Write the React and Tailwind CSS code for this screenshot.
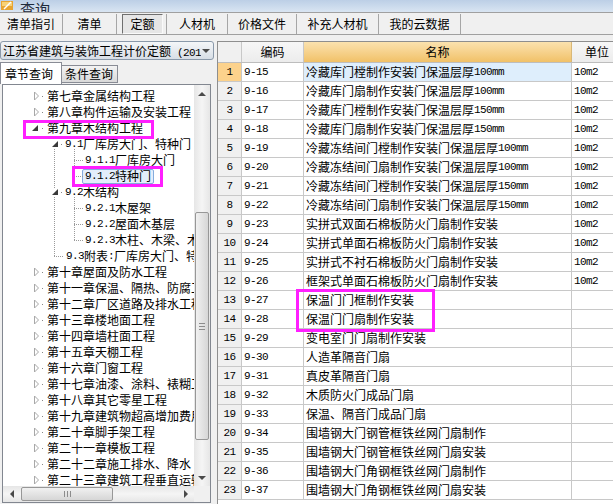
import React from "react";

const tabs = [
  ["清单指引", "w-[63px]"],
  ["清单", "w-[54px]"],
  ["定额", "w-[50px]", true],
  ["人材机", "w-[61px]"],
  ["价格文件", "w-[69px]"],
  ["补充人材机", "w-[82px]"],
  ["我的云数据", "w-[82px]"],
];

const tree = [
  { t: "第七章金属结构工程", pl: "pl-[44px]" },
  { t: "第八章构件运输及安装工程", pl: "pl-[44px]" },
  { t: "第九章木结构工程", pl: "pl-[44px]" },
  { t: "9.1厂库房大门、特种门", pl: "pl-[62px]" },
  { t: "9.1.1厂库房大门", pl: "pl-[82px]" },
  { t: "9.1.2特种门", pl: "pl-[79px]", sel: true },
  { t: "9.2木结构", pl: "pl-[62px]" },
  { t: "9.2.1木屋架", pl: "pl-[82px]" },
  { t: "9.2.2屋面木基层", pl: "pl-[82px]" },
  { t: "9.2.3木柱、木梁、木楼梯", pl: "pl-[82px]" },
  { t: "9.3附表:厂库房大门、特种门五金铁件表", pl: "pl-[63px]" },
  { t: "第十章屋面及防水工程", pl: "pl-[44px]" },
  { t: "第十一章保温、隔热、防腐工程", pl: "pl-[44px]" },
  { t: "第十二章厂区道路及排水工程", pl: "pl-[44px]" },
  { t: "第十三章楼地面工程", pl: "pl-[44px]" },
  { t: "第十四章墙柱面工程", pl: "pl-[44px]" },
  { t: "第十五章天棚工程", pl: "pl-[44px]" },
  { t: "第十六章门窗工程", pl: "pl-[44px]" },
  { t: "第十七章油漆、涂料、裱糊工程", pl: "pl-[44px]" },
  { t: "第十八章其它零星工程", pl: "pl-[44px]" },
  { t: "第十九章建筑物超高增加费用", pl: "pl-[44px]" },
  { t: "第二十章脚手架工程", pl: "pl-[44px]" },
  { t: "第二十一章模板工程", pl: "pl-[44px]" },
  { t: "第二十二章施工排水、降水", pl: "pl-[44px]" },
  { t: "第二十三章建筑工程垂直运输", pl: "pl-[44px]" },
];

const rows = [
  ["9-15", "冷藏库门樘制作安装门保温层厚100mm", "10m2"],
  ["9-16", "冷藏库门扇制作安装门保温层厚100mm", "10m2"],
  ["9-17", "冷藏库门樘制作安装门保温层厚150mm", "10m2"],
  ["9-18", "冷藏库门扇制作安装门保温层厚150mm", "10m2"],
  ["9-19", "冷藏冻结间门樘制作安装门保温层厚100mm", "10m2"],
  ["9-20", "冷藏冻结间门扇制作安装门保温层厚100mm", "10m2"],
  ["9-21", "冷藏冻结间门樘制作安装门保温层厚150mm", "10m2"],
  ["9-22", "冷藏冻结间门扇制作安装门保温层厚150mm", "10m2"],
  ["9-23", "实拼式双面石棉板防火门扇制作安装", "10m2"],
  ["9-24", "实拼式单面石棉板防火门扇制作安装", "10m2"],
  ["9-25", "实拼式不衬石棉板防火门扇制作安装", "10m2"],
  ["9-26", "框架式单面石棉板防火门扇制作安装", "10m2"],
  ["9-27", "保温门门框制作安装", ""],
  ["9-28", "保温门门扇制作安装", ""],
  ["9-29", "变电室门门扇制作安装", ""],
  ["9-30", "人造革隔音门扇", ""],
  ["9-31", "真皮革隔音门扇", ""],
  ["9-32", "木质防火门成品门扇", ""],
  ["9-33", "保温、隔音门成品门扇", ""],
  ["9-34", "围墙钢大门钢管框铁丝网门扇制作", ""],
  ["9-35", "围墙钢大门钢管框铁丝网门扇安装", ""],
  ["9-36", "围墙钢大门角钢框铁丝网门扇制作", ""],
  ["9-37", "围墙钢大门角钢框铁丝网门扇安装", ""],
];

const ascii = /^[\x20-\x7e]+$/;

// half-width runs in a mono face so digits sit at 6px like the original
function Mix({ t }) {
  return t
    .split(/([\x20-\x7e]+)/)
    .filter(Boolean)
    .map((s, i) =>
      ascii.test(s) ? (
        <span key={i} className="[font-family:'Liberation_Mono',monospace] text-[11px] leading-[12px] tracking-[-0.6px]">
          {s}
        </span>
      ) : (
        <span key={i} className="leading-[14px]">{s}</span>
      )
    );
}

function TreeLines() {
  const c = (i) => 11 + 16 * i;
  const collapsed = [0, 1, 11, 12, 13, 14, 15, 16, 17, 18, 19, 20, 21, 22, 23, 24];
  return (
    <svg className="absolute left-0 top-0 pointer-events-none" width="191" height="401">
      {collapsed.map((i) => (
        <g key={i}>
          <polygon points={`31.5,${c(i) - 4} 35.5,${c(i)} 31.5,${c(i) + 4}`} fill="#fff" stroke="#a8a8a8" />
          <rect x="39" y={c(i)} width="1" height="1" fill="#888" />
        </g>
      ))}
      <polygon points={`35,${c(2) - 3} 35,${c(2) + 3} 29,${c(2) + 3}`} fill="#3a3a3a" />
      <rect x="39" y={c(2)} width="1" height="1" fill="#888" />
      {[3, 6].map((i) => (
        <g key={i}>
          <polygon points={`55,${c(i) - 3} 55,${c(i) + 3} 49,${c(i) + 3}`} fill="#3a3a3a" />
          <rect x="58" y={c(i)} width="1" height="1" fill="#888" />
        </g>
      ))}
      <g stroke="#9a9a9a" strokeDasharray="1 1" shapeRendering="crispEdges">
        <line x1="51.5" y1={c(3) + 5} x2="51.5" y2={c(6) - 4} />
        <line x1="51.5" y1={c(6) + 5} x2="51.5" y2={c(10)} />
        <line x1="51" y1={c(10) + 0.5} x2="61" y2={c(10) + 0.5} />
        <line x1="71.5" y1={c(3) + 5} x2="71.5" y2={c(5)} />
        <line x1="71.5" y1={c(6) + 5} x2="71.5" y2={c(9)} />
        {[4, 5, 7, 8, 9].map((i) => (
          <line key={i} x1="71" y1={c(i) + 0.5} x2="81" y2={c(i) + 0.5} />
        ))}
      </g>
    </svg>
  );
}

function Tri({ d }) {
  const p = {
    up: "0,4 4,0 8,4",
    down: "0,0 8,0 4,4",
    left: "4,0 0,4 4,8",
    right: "0,0 4,4 0,8",
  }[d];
  const w = d === "up" || d === "down" ? 8 : 4;
  const h = d === "up" || d === "down" ? 4 : 8;
  return (
    <svg width={w} height={h}>
      <polygon points={p} fill="#4a4a4a" />
    </svg>
  );
}

function Box({ className }) {
  return <div className={`absolute border-[3px] border-[#ff1fff] pointer-events-none ${className}`} />;
}

export default function App() {
  return (
    <div className="relative w-[613px] h-[504px] overflow-hidden bg-[#f0f0f0] text-[12px] text-black [font-family:'Noto_Sans_CJK_SC',sans-serif]">
      {/* title bar, mostly cropped */}
      <div className="h-[12px] overflow-hidden bg-gradient-to-b from-[#bccfe6] to-[#d9e5f2] flex items-end gap-[6px] pl-[1px]">
        <svg width="13" height="10" className="mb-[1px]">
          <rect x="0" y="0" width="12" height="9" fill="#e8a532" />
          <rect x="1" y="1" width="10" height="4" fill="#f7d277" />
          <line x1="3" y1="8" x2="10" y2="1" stroke="#fff" strokeWidth="1.5" />
        </svg>
        <span className="text-[15px] leading-[12px] -mb-[3px] text-[#1e2a3a]">查询</span>
      </div>

      {/* main tab bar */}
      <div className="h-[23px] border-t border-b border-[#a0a0a0] flex items-center">
        {tabs.map(([t, w, sel]) => (
          <div key={t} className={`${w} h-[20px] border-r border-[#a6a6a6] flex items-center ${sel ? "pl-[5px]" : "justify-center"}`}>
            {sel ? (
              <div className="w-[41px] h-[20px] border border-t-[#6f6f6f] border-l-[#6f6f6f] border-r-[#fafafa] border-b-[#fafafa] bg-[#e6e6e6] flex items-center justify-center">
                {t}
              </div>
            ) : (
              t
            )}
          </div>
        ))}
      </div>

      <div className="flex pt-[6px] h-[469px]">
        {/* left column */}
        <div className="w-[214px] flex flex-col">
          <div className="h-[19px] rounded-[3px] border border-[#8a99aa] bg-gradient-to-b from-[#f4f6f8] to-[#d7dee6] flex items-center pl-[2px] pr-[3px]">
            <div className="w-[198px] overflow-hidden whitespace-nowrap">
              <Mix t="江苏省建筑与装饰工程计价定额 (2014)" />
            </div>
            <div className="ml-auto flex items-center">
              <Tri d="down" />
            </div>
          </div>

          <div className="mt-[2px] h-[22px] flex items-end">
            <div className="w-[62px] h-[22px] bg-white border border-b-0 border-[#898c95] flex items-center pl-[4px]">章节查询</div>
            <div className="w-[56px] h-[18px] mb-[1px] bg-gradient-to-b from-[#f3f3f3] to-[#d9d9d9] border border-l-0 border-[#898c95] flex items-center pl-[3px]">
              条件查询
            </div>
          </div>

          <div className="flex-1 pl-[2px]">
            <div className="w-[209px] h-[419px] border border-[#828790] bg-white flex flex-col">
              <div className="flex h-[401px]">
                <div className="relative w-[191px] overflow-hidden pt-[3px]">
                  <TreeLines />
                  {tree.map((n) => (
                    <div key={n.t} className={`h-[16px] flex items-center whitespace-nowrap ${n.pl}`}>
                      {n.sel ? (
                        <span className="border border-[#84acdd] bg-[#e3eefb] rounded-[2px] px-[2px] flex items-center h-[15px]">
                          <Mix t={n.t} />
                        </span>
                      ) : (
                        <Mix t={n.t} />
                      )}
                    </div>
                  ))}
                </div>
                {/* vertical scrollbar */}
                <div className="w-[16px] flex flex-col bg-gradient-to-r from-[#e6e6e6] via-[#f5f5f5] to-[#e6e6e6]">
                  <div className="h-[17px] flex items-center justify-center">
                    <Tri d="up" />
                  </div>
                  <div className="h-[110px]" />
                  <div className="h-[228px] mx-[1px] rounded-[2px] border border-[#979797] bg-gradient-to-r from-[#f1f1f1] to-[#d6d6d6] flex flex-col items-center justify-center gap-[2px]">
                    <div className="w-[6px] h-px bg-[#8c8c8c]" />
                    <div className="w-[6px] h-px bg-[#8c8c8c]" />
                    <div className="w-[6px] h-px bg-[#8c8c8c]" />
                  </div>
                  <div className="flex-1" />
                  <div className="h-[17px] flex items-center justify-center">
                    <Tri d="down" />
                  </div>
                </div>
              </div>
              {/* horizontal scrollbar */}
              <div className="flex h-[16px]">
                <div className="w-[191px] flex items-center bg-gradient-to-b from-[#e6e6e6] via-[#f5f5f5] to-[#e6e6e6]">
                  <div className="w-[17px] flex justify-center">
                    <Tri d="left" />
                  </div>
                  <div className="w-[92px] h-[14px] ml-[1px] rounded-[2px] border border-[#979797] bg-gradient-to-b from-[#f1f1f1] to-[#d6d6d6] flex items-center justify-center gap-[2px]">
                    <div className="w-px h-[6px] bg-[#8c8c8c]" />
                    <div className="w-px h-[6px] bg-[#8c8c8c]" />
                    <div className="w-px h-[6px] bg-[#8c8c8c]" />
                  </div>
                  <div className="flex-1" />
                  <div className="w-[17px] flex justify-center">
                    <Tri d="right" />
                  </div>
                </div>
                <div className="flex-1 bg-[#f0f0f0]" />
              </div>
            </div>
          </div>
        </div>

        <div className="w-[3px]" />

        {/* grid */}
        <div className="flex-1 border-l border-t border-[#8e8e8e] bg-white overflow-hidden">
          <div className="h-[21px] flex border-b border-[#bdbdbd] whitespace-nowrap">
            <div className="w-[24px] shrink-0 border-r border-[#c8c8c8] bg-[#f0f0f0]" />
            <div className="w-[62px] shrink-0 border-r border-[#c8c8c8] bg-gradient-to-b from-[#f7f7f7] to-[#ececec] flex items-center justify-center">编码</div>
            <div className="w-[268px] shrink-0 border-r border-[#d9b877] bg-gradient-to-b from-[#fbe2ae] to-[#f1c167] flex items-center justify-center">名称</div>
            <div className="w-[50px] shrink-0 bg-gradient-to-b from-[#f7f7f7] to-[#ececec] flex items-center justify-center">单位</div>
          </div>
          {rows.map(([code, name, unit], i) => (
            <div key={code} className="h-[19px] flex border-b border-[#c8c8c8] whitespace-nowrap">
              <div className={`w-[24px] shrink-0 border-r border-[#c8c8c8] flex items-center justify-center ${i === 0 ? "bg-[#fcd28c]" : "bg-[#f0f0f0]"}`}>
                <Mix t={String(i + 1)} />
              </div>
              <div className="w-[62px] shrink-0 border-r border-[#c8c8c8] flex items-center pl-[2px]">
                <Mix t={code} />
              </div>
              <div className={`w-[268px] shrink-0 border-r border-[#c8c8c8] flex items-center pl-[2px] overflow-hidden ${i === 0 ? "bg-[#deeefc]" : ""}`}>
                <Mix t={name} />
              </div>
              <div className="w-[50px] shrink-0 flex items-center pl-[2px]">
                <Mix t={unit} />
              </div>
            </div>
          ))}
        </div>
      </div>

      <Box className="left-[23px] top-[120px] w-[131px] h-[19px]" />
      <Box className="left-[72px] top-[166px] w-[91px] h-[21px]" />
      <Box className="left-[296px] top-[289px] w-[139px] h-[43px]" />
    </div>
  );
}
